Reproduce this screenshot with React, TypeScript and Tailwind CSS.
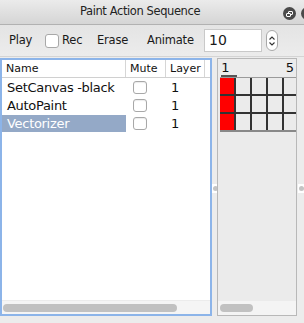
import React from 'react'

const rows = [
  { name: 'SetCanvas -black', layer: 1 },
  { name: 'AutoPaint', layer: 1 },
  { name: 'Vectorizer', layer: 1, selected: true },
]

function Check() {
  return <span className="block w-[14px] h-[13px] rounded-[3px] border border-[#a8a8a8] bg-white shadow-[inset_0_1px_1px_rgba(0,0,0,0.08)]" />
}

function Handle() {
  return (
    <div className="w-[6px] h-[9px] bg-white flex items-center justify-center">
      <span className="block w-[5px] h-[5px] rounded-full bg-[#c4c4c4]" />
    </div>
  )
}

export default function App() {
  const cols = [0, 1, 2, 3, 4]
  return (
    <div className="w-[304px] h-[323px] bg-[#ececec] flex flex-col overflow-hidden text-black" style={{ fontFamily: '"DejaVu Sans", sans-serif' }}>
      {/* Title bar */}
      <div className="relative h-[25px] shrink-0 bg-gradient-to-b from-[#ebebeb] to-[#d5d5d5] border-b border-[#b1b1b1] flex items-center">
        <span className="ml-[80px] text-[11.5px] text-[#222] tracking-[-0.4px]">Paint Action Sequence</span>
        <span className="absolute left-[283px] top-[7px] w-[13px] h-[13px] rounded-full bg-[#4a4a4a] flex items-center justify-center">
          <span className="relative block w-[7px] h-[6px]">
            <span className="absolute left-[2px] top-0 w-[5px] h-[4px] border border-white rounded-[1px]" />
            <span className="absolute left-0 top-[2px] w-[5px] h-[4px] border border-white rounded-[1px] bg-[#4a4a4a]" />
          </span>
        </span>
        <span className="absolute left-[301px] top-[7px] w-[13px] h-[13px] rounded-full bg-[#4a4a4a]" />
      </div>

      {/* Toolbar */}
      <div className="h-[32px] shrink-0 bg-gradient-to-b from-[#e4e4e4] to-[#ececec] border-b border-[#d4d4d4] flex items-center text-[11.5px] text-[#1a1a1a] tracking-[-0.2px]">
        <span className="ml-[9px] w-[36px]">Play</span>
        <span className="w-[14px] h-[14px] rounded-[3px] border border-[#a8a8a8] bg-white" />
        <span className="ml-[3px] w-[35px]">Rec</span>
        <span className="w-[50px]">Erase</span>
        <span className="w-[57px]">Animate</span>
        <div className="w-[58px] h-[23px] bg-white border border-[#c9c9c9] flex items-center pl-[4px] text-[14px] tracking-normal">10</div>
        <div className="ml-[4px] w-[12px] h-[21px] rounded-[6px] border border-[#a9a9a9] bg-white flex flex-col items-center justify-center gap-[2px]">
          <svg width="6" height="4" viewBox="0 0 6 4"><path d="M0.5 3.5 L3 1 L5.5 3.5" fill="none" stroke="#333" strokeWidth="1.1" /></svg>
          <svg width="6" height="4" viewBox="0 0 6 4"><path d="M0.5 0.5 L3 3 L5.5 0.5" fill="none" stroke="#333" strokeWidth="1.1" /></svg>
        </div>
      </div>

      {/* Main */}
      <div className="flex-1 flex pt-[1px] pb-[7px]">
        {/* Left table panel */}
        <div className="w-[213px] border-2 border-[#8cb4e9] bg-white flex flex-col">
          <div className="h-[18px] flex items-end text-[11px] text-[#111] border-b border-[#d0d0d0]">
            <div className="w-[124px] pl-[4px] border-r border-[#d6d6d6] h-[17px] leading-[17px]">Name</div>
            <div className="w-[40px] pl-[4px] border-r border-[#d6d6d6] h-[17px] leading-[17px]">Mute</div>
            <div className="w-[39px] pl-[4px] border-r border-[#d6d6d6] h-[17px] leading-[17px]">Layer</div>
          </div>
          {rows.map(r => (
            <div key={r.name} className="h-[18px] flex items-center text-[13px] pt-[1px]">
              <div className={`w-[124px] h-full flex items-center pl-[5px] ${r.selected ? 'bg-[#94a9c7] text-white' : 'text-[#111]'}`}>
                <span className="tracking-[-0.3px]">{r.name}</span>
              </div>
              <div className="w-[40px] h-full flex items-center pl-[7px]"><Check /></div>
              <div className="w-[39px] pl-[5px] text-[#111]">{r.layer}</div>
            </div>
          ))}
          <div className="flex-1" />
          <div className="h-[14px] bg-[#f5f5f5] border-t border-[#ececec] flex items-center pl-[1px]">
            <span className="block w-[174px] h-[8px] rounded-full bg-[#c1c1c1]" />
          </div>
        </div>

        {/* Splitter */}
        <div className="w-[5px] flex items-center">
          <div className="mt-[3px]"><Handle /></div>
        </div>

        {/* Right grid panel */}
        <div className="w-[80px] border border-[#b8b8b8] bg-[#ebebeb] flex flex-col">
          <div className="h-[18px] relative text-[13px] text-[#111] bg-[#ececec]">
            <span className="absolute left-[3px] top-[1px] leading-[15px] border-b-2 border-[#555] w-[16px]">1</span>
            <span className="absolute right-[2px] top-[1px] leading-[15px]">5</span>
          </div>
          <div className="border-t border-[#9a9a9a] ml-[2px]">
            {[0, 1, 2].map(ri => (
              <div key={ri} className="flex h-[18px] border-b-2 border-[#333] last:border-[#888]">
                {cols.map(ci => (
                  <div key={ci} className={`h-full ${ci === 4 ? 'flex-1' : 'w-[16px] border-r-2 border-[#333]'}`}>
                    {ci === 0 && <div className="w-[14px] h-full bg-[#ff0000]" />}
                  </div>
                ))}
              </div>
            ))}
          </div>
          <div className="flex-1" />
          <div className="h-[14px] bg-[#f4f4f4] flex items-center pl-[2px]">
            <span className="block w-[33px] h-[8px] rounded-full bg-[#c1c1c1]" />
          </div>
        </div>

        {/* Right splitter */}
        <div className="flex-1 flex items-center pl-[1px]">
          <div className="mt-[3px]"><Handle /></div>
        </div>
      </div>
    </div>
  )
}
